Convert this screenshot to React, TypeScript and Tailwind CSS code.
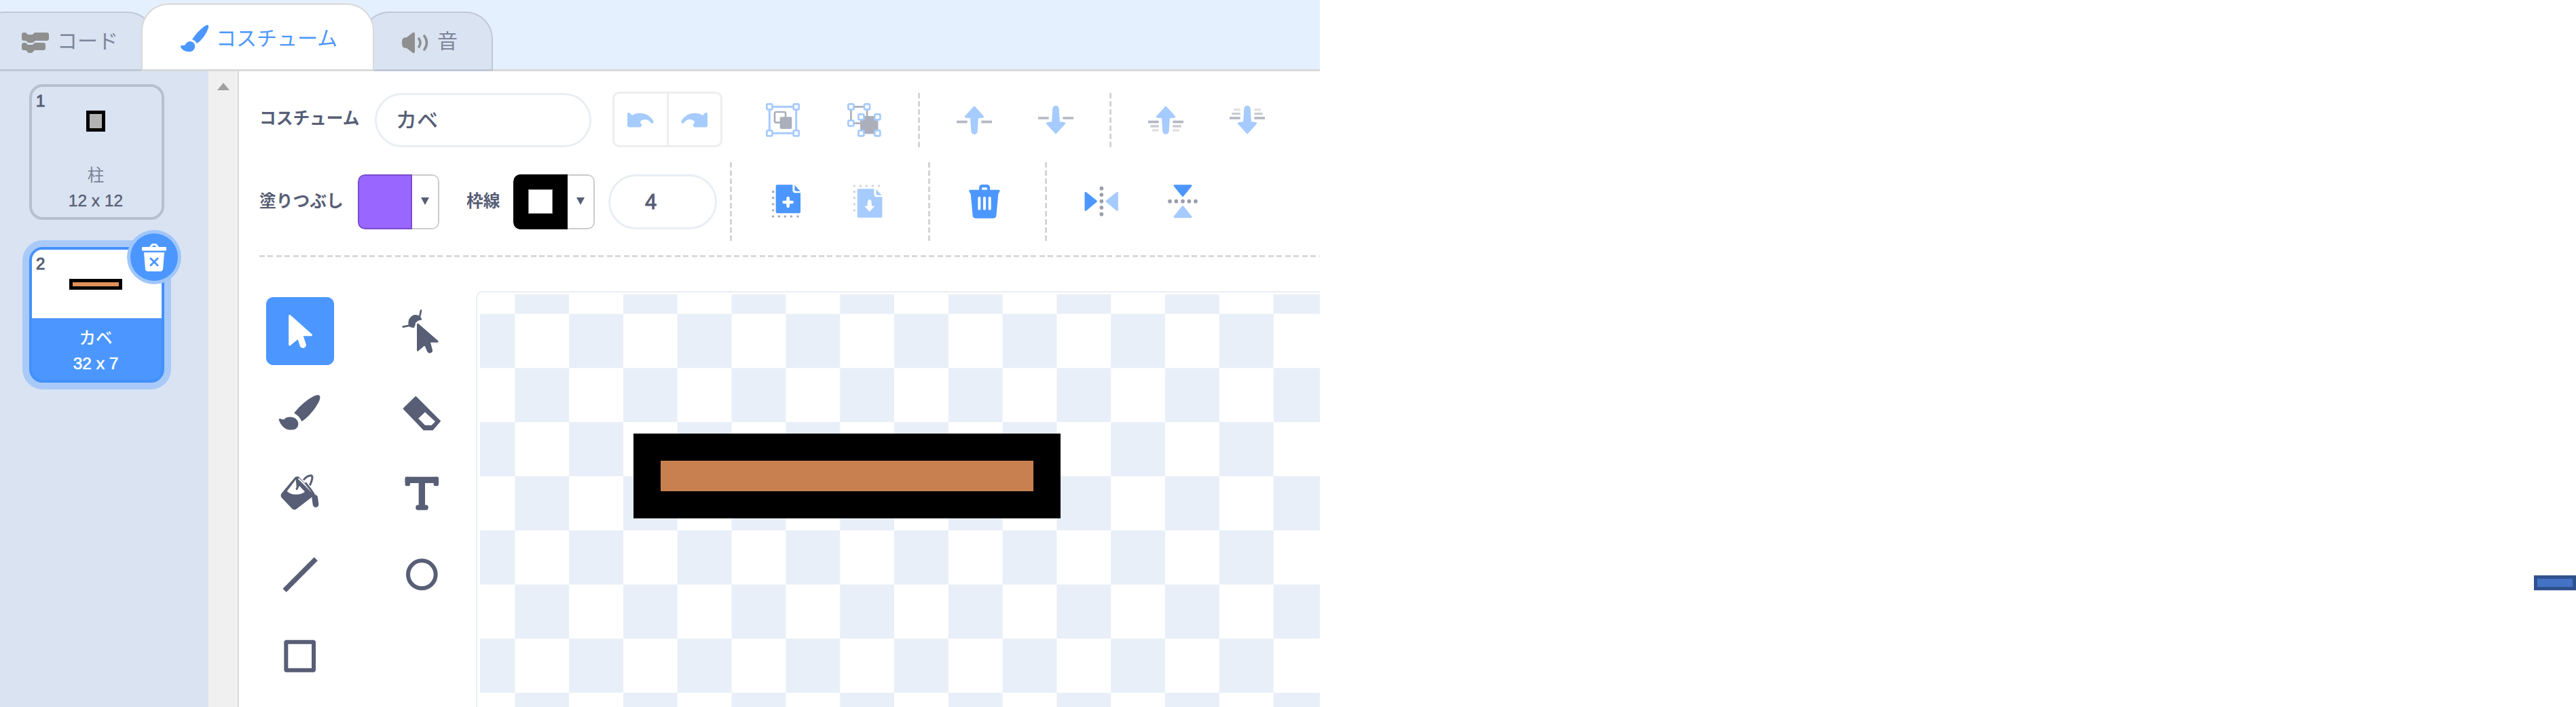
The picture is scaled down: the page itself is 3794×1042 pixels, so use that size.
import type { ReactNode } from "react";

const BLUE = "#4c97ff";
const LIGHT = "#a6cbff";
const INK = "#575e75";
const GREY = "#abafbc";

function ToolbarIcon({ children }: { children: ReactNode }) {
  return (
    <button className="flex w-[120px] shrink-0 items-center justify-center">
      <svg viewBox="0 0 180 180" className="size-[60px]" fill="none">
        {children}
      </svg>
    </button>
  );
}

function ToolIcon({ children, selected = false }: { children: ReactNode; selected?: boolean }) {
  return (
    <button
      className={
        selected
          ? "flex size-[100px] items-center justify-center rounded-[10px] border border-[#4490fb] bg-[#4c97ff]"
          : "flex size-[100px] items-center justify-center"
      }
    >
      <svg viewBox="0 0 210 210" className="size-[70px] shrink-0" fill="none">
        {children}
      </svg>
    </button>
  );
}

function Separator({ className }: { className: string }) {
  return (
    <div
      className={
        "w-[3px] shrink-0 bg-[repeating-linear-gradient(to_bottom,#d4d4d4_0px,#d4d4d4_8px,transparent_8px,transparent_12px)] " +
        className
      }
    />
  );
}

function Handles({ points }: { points: [number, number][] }) {
  return (
    <>
      {points.map(([x, y]) => (
        <rect key={`${x}-${y}`} x={x - 12} y={y - 12} width="24" height="24" rx="4" fill="white" stroke={LIGHT} strokeWidth="8" />
      ))}
    </>
  );
}

function ArrowUp() {
  return (
    <path
      d="M90 31 L129 74 Q131 77 126 77 L105 79 L101 140 Q99 150 90 150 Q81 150 79 140 L75 79 L54 77 Q49 77 51 74 Z"
      fill={LIGHT}
      stroke={LIGHT}
      strokeWidth="6"
      strokeLinejoin="round"
    />
  );
}

function LayerLines({ all = false }: { all?: boolean }) {
  return (
    <g stroke={GREY} strokeLinecap="butt">
      <path d="M12 98H59M121 98H168" strokeWidth="11" opacity="0.9" />
      {all && <path d="M22 117H59M121 117H158" strokeWidth="10" opacity="0.65" />}
      {all && <path d="M30 135H59M121 135H150" strokeWidth="11" opacity="0.38" />}
    </g>
  );
}

function Dots({ points, color, r }: { points: [number, number][]; color: string; r: number }) {
  return (
    <>
      {points.map(([x, y]) => (
        <circle key={`${x}-${y}`} cx={x} cy={y} r={r} fill={color} />
      ))}
    </>
  );
}

function ColorSwatch({ children }: { children: ReactNode }) {
  return (
    <button className="flex h-[81px] w-[120px] shrink-0 overflow-hidden rounded-[10px] bg-white">
      {children}
      <span className="flex h-full w-10 items-center justify-center rounded-r-[10px] border-[2.5px] border-l-0 border-[#cbcbcb]">
        <svg viewBox="0 0 12 11" className="-mt-px h-[11px] w-3">
          <path d="M0 0H12L6 11Z" fill={INK} />
        </svg>
      </span>
    </button>
  );
}

function Tabs() {
  return (
    <header className="flex h-[105px] items-end bg-[#e5f0ff] text-[30px] leading-none">
      <div className="-ml-[34px] flex h-[88px] w-[262px] shrink-0 items-center rounded-t-[40px] border-[2.5px] border-b-[3px] border-[#c0c8d6] bg-[#d9e3f2] pl-[64px] text-[#7d8499]">
        <svg viewBox="0 0 40 30" className="mt-[5px] h-[30px] w-10" fill="#8f8f8f">
          <path d="M0 3Q0 0 3 0H6L9 3H16L19 0H37Q40 0 40 3V9Q40 12 37 12H20L16 15H10L6 12H3Q0 12 0 9Z" />
          <path d="M0 18Q0 15 3 15H6L9 18H16L19 15H32Q35 15 35 18V23Q35 26 32 26H19L15 30H10L6 26H3Q0 26 0 23Z" />
        </svg>
        <span className="ml-[12px]">コード</span>
      </div>
      <div className="relative -ml-5 flex h-[100px] w-[343px] shrink-0 items-center rounded-t-[40px] border-[2.5px] border-b-[3px] border-[#d9d9d9] bg-white pl-[56px] text-[#4c97ff]">
        <svg viewBox="0 0 42 42" className="mt-1 size-[42px]" fill={BLUE}>
          <path d="M17 22C22 14 33 3 38 1Q42 0 41 5C39 12 31 24 24 28Q22 24 17 22Z" />
          <path d="M0 33Q0 30 4 31Q7 31 8 28C11 24 17 24 20 28C23 33 20 39 15 40C8 41 2 38 0 33Z" />
        </svg>
        <span className="mt-[5px] ml-[10px]">コスチューム</span>
      </div>
      <div className="-ml-[18px] flex h-[88px] w-[193px] shrink-0 items-center rounded-t-[40px] border-[2.5px] border-b-[3px] border-[#c0c8d6] bg-[#d9e3f2] pl-[56px] text-[#7d8499]">
        <svg viewBox="0 0 40 32" className="mt-[5px] h-8 w-10" fill="none">
          <path d="M2 10Q0 16 2 22Q4 24 8 24L17 31Q20 32 20 29V3Q20 0 17 1L8 8Q4 8 2 10Z" fill="#8f8f8f" />
          <path d="M26 10Q30 16 26 22M34 6Q41 16 34 26" stroke="#8f8f8f" strokeWidth="3.6" strokeLinecap="round" />
        </svg>
        <span className="ml-[13px]">音</span>
      </div>
      <div className="h-[3px] flex-1 bg-[#d9d9d9]" />
    </header>
  );
}

function CostumeList() {
  return (
    <aside className="flex w-[307px] shrink-0 flex-col gap-[40px] bg-[#d9e3f2] pt-[19px] pl-[43px] text-[24.5px] leading-none text-[#575e75]">
      <div className="relative flex h-[200px] w-[199px] flex-col items-center rounded-[20px] border-4 border-[#b7c0cd]">
        <span className="absolute top-[9px] left-[6px] text-[24px] [-webkit-text-stroke:1px]">1</span>
        <div className="flex h-[101px] items-center pr-[3px]">
          <div className="h-[31px] w-7 border-[5px] border-black bg-[#b3b3b3]" />
        </div>
        <span className="mt-[11px] flex h-[38px] items-center pr-[3px] text-[#7d8499]">柱</span>
        <span className="flex h-9 items-center pr-[3px] [-webkit-text-stroke:0.4px]">12 x 12</span>
      </div>
      <div className="relative flex h-[200px] w-[199px] flex-col items-center rounded-[20px] border-4 border-[#4490fb] bg-[#4c97ff] text-white shadow-[0_0_0_10px_#a9caf8]">
        <span className="absolute top-[9px] left-[6px] text-[24px] text-[#575e75] [-webkit-text-stroke:1px]">2</span>
        <div className="flex h-[101px] w-full items-center justify-center rounded-t-[15px] bg-white pr-[3px]">
          <div className="h-4 w-[78px] border-[5px] border-black bg-[#df9159]" />
        </div>
        <span className="mt-[11px] flex h-[38px] items-center pr-[3px] font-medium">カベ</span>
        <span className="flex h-9 items-center pr-[3px] [-webkit-text-stroke:0.6px]">32 x 7</span>
        <button className="absolute -top-[24px] -right-[24px] flex size-[70px] items-center justify-center rounded-full bg-[#4c97ff] shadow-[0_0_0_5px_#a0c6fa]">
          <svg viewBox="0 0 36 41" className="h-[41px] w-9" fill="none">
            <path d="M0 6Q0 5 1 5H11L14 1Q15 0 16 0H20Q21 0 22 1L25 5H35Q36 5 36 6V9Q36 10.500 35 10.500H1Q0 10.500 0 9ZM15 5H21L20 3H16Z" fill="white" fillRule="evenodd" />
            <path d="M3 13H33L31 38Q30 41 27 41H9Q6 41 5 38Z" fill="white" />
            <path d="M13 22L23 32M23 22L13 32" stroke={BLUE} strokeWidth="3" strokeLinecap="round" />
          </svg>
        </button>
      </div>
    </aside>
  );
}

function HistoryArrow() {
  return (
    <path
      d="M0 2Q0 0 2 0Q4 0 5 2L7 4C17 -2 32 0 38.500 13Q39 15 37 16Q35 16 34 14C30 9 24 9 20 12Q18 14 20 16Q23 19 19 21.500H3Q0 21.500 0 19Z"
      fill={LIGHT}
    />
  );
}

function TopToolbar() {
  return (
    <div className="mt-8 ml-[30px] flex h-20 shrink-0 items-center text-[24.700px] leading-none font-bold text-[#575e75]">
      <span className="-mt-[3px] w-[170px] shrink-0 whitespace-nowrap">コスチューム</span>
      <div className="flex h-20 w-[319px] shrink-0 items-center rounded-full border-[3px] border-[#e9eef4] pl-[28px] text-[31px] font-medium">カベ</div>
      <div className="-mt-[2px] ml-[31px] flex h-[82px] w-[162px] shrink-0 rounded-[10px] border-[3px] border-[#eeeeee]">
        <button className="flex flex-1 items-center justify-center border-r-[3px] border-[#eeeeee]">
          <svg viewBox="0 0 39 22" className="mt-[2px] h-[22px] w-[39px]">
            <HistoryArrow />
          </svg>
        </button>
        <button className="flex flex-1 items-center justify-center">
          <svg viewBox="0 0 39 22" className="mt-[2px] h-[22px] w-[39px] -scale-x-100">
            <HistoryArrow />
          </svg>
        </button>
      </div>
      <div className="w-[29px] shrink-0" />
      <ToolbarIcon>
        <rect x="31" y="31" width="118" height="117" stroke={LIGHT} strokeWidth="9" />
        <Handles points={[[31, 31], [149, 31], [31, 148], [149, 148]]} />
        <rect x="54" y="54" width="48" height="47" rx="7" stroke={GREY} strokeWidth="8" />
        <rect x="77" y="76" width="53" height="53" rx="6" fill={GREY} />
      </ToolbarIcon>
      <ToolbarIcon>
        <rect x="31" y="31" width="71" height="73" stroke={GREY} strokeWidth="8" />
        <rect x="72" y="72" width="79" height="79" fill={GREY} />
        <Handles points={[[31, 31], [102, 31], [31, 104], [76, 76], [148, 76], [76, 148], [148, 148]]} />
      </ToolbarIcon>
      <Separator className="mr-5 ml-[19px] h-20" />
      <ToolbarIcon>
        <ArrowUp />
        <LayerLines />
      </ToolbarIcon>
      <ToolbarIcon>
        <g transform="translate(0 179) scale(1 -1)">
          <ArrowUp />
          <LayerLines />
        </g>
      </ToolbarIcon>
      <Separator className="mr-5 ml-[19px] h-20" />
      <ToolbarIcon>
        <ArrowUp />
        <LayerLines all />
      </ToolbarIcon>
      <ToolbarIcon>
        <g transform="translate(0 179) scale(1 -1)">
          <ArrowUp />
          <LayerLines all />
        </g>
      </ToolbarIcon>
    </div>
  );
}

function StyleToolbar() {
  return (
    <div className="mt-[22px] ml-[30px] flex h-[116px] shrink-0 items-center text-[24.700px] leading-none font-bold text-[#575e75]">
      <span className="w-[145px] shrink-0 whitespace-nowrap">塗りつぶし</span>
      <ColorSwatch>
        <span className="h-full w-20 rounded-l-[10px] border-[2.5px] border-[#7a4ccc] bg-[#9966ff]" />
      </ColorSwatch>
      <span className="ml-[40px] w-[69px] shrink-0 whitespace-nowrap">枠線</span>
      <ColorSwatch>
        <span className="flex h-full w-20 items-center justify-center rounded-l-[10px] bg-black">
          <span className="size-9 border border-[#9a9a9a] bg-white" />
        </span>
      </ColorSwatch>
      <div className="ml-5 flex h-[81px] w-[160px] shrink-0 items-center rounded-full border-[3px] border-[#e9eef4] pl-[51px] text-[31px] font-normal [-webkit-text-stroke:1px]">4</div>
      <Separator className="ml-[19px] h-[116px]" />
      <div className="w-[22px] shrink-0" />
      <ToolbarIcon>
        <path d="M44 16H112V38Q112 52 126 52H147V136Q147 142 141 142H44Q38 142 38 136V22Q38 16 44 16Z" fill={BLUE} />
        <path d="M121 18L146 44H130Q121 44 121 36Z" fill={BLUE} />
        <path d="M92 75V111M74 93H110" stroke="white" strokeWidth="14" strokeLinecap="round" />
        <Dots color="#a9acb8" r={5.5} points={[[26, 47], [26, 74], [26, 102], [26, 129], [26, 156], [52, 156], [79, 156], [106, 156], [135, 156]]} />
      </ToolbarIcon>
      <ToolbarIcon>
        <path d="M44 34H112V56Q112 70 126 70H148V155Q148 161 142 161H44Q38 161 38 155V40Q38 34 44 34Z" fill={LIGHT} />
        <path d="M121 36L146 62H130Q121 62 121 54Z" fill={LIGHT} />
        <path d="M84 88Q92 74 100 88L102 110H115L92 135L69 110H82Z" fill="white" />
        <Dots color="#d4d6dc" r={5.5} points={[[25, 47], [25, 74], [25, 102], [25, 129], [25, 21], [52, 21], [79, 21], [106, 21], [133, 21]]} />
      </ToolbarIcon>
      <Separator className="ml-[27px] h-[116px]" />
      <div className="w-5 shrink-0" />
      <ToolbarIcon>
        <path
          d="M26 38H66V28Q68 15 80 15H100Q112 15 114 28V38H154Q160 40 156 48L151 56L142 154Q140 164 130 164H50Q40 164 38 154L29 56L23 48Q20 40 26 38ZM78 38H102V32Q101 28 97 28H83Q79 28 78 32Z"
          fill={BLUE}
          fillRule="evenodd"
        />
        <path d="M67 74V122M90 74V122M113 74V122" stroke="white" strokeWidth="12" strokeLinecap="round" />
      </ToolbarIcon>
      <Separator className="ml-[29px] h-[116px]" />
      <div className="w-5 shrink-0" />
      <ToolbarIcon>
        <path d="M21 52L67 89L21 127Z" fill={BLUE} stroke={BLUE} strokeWidth="9" strokeLinejoin="round" />
        <path d="M160 52L114 89L160 127Z" fill={LIGHT} stroke={LIGHT} strokeWidth="9" strokeLinejoin="round" />
        <Dots color="#9a9eac" r={8.5} points={[[91, 32], [91, 60], [91, 89], [91, 117], [91, 146]]} />
      </ToolbarIcon>
      <ToolbarIcon>
        <path d="M54 20H126L90 64Z" fill={BLUE} stroke={BLUE} strokeWidth="9" strokeLinejoin="round" />
        <path d="M54 158H126L90 113Z" fill={LIGHT} stroke={LIGHT} strokeWidth="9" strokeLinejoin="round" />
        <Dots color="#9a9eac" r={8.5} points={[[33, 89], [61, 89], [90, 89], [118, 89], [147, 89]]} />
      </ToolbarIcon>
    </div>
  );
}

function ToolPalette() {
  return (
    <div className="grid h-fit w-[280px] shrink-0 grid-cols-[100px_100px] gap-x-20 gap-y-[19.700px]">
      <ToolIcon selected>
        <path d="M59 37L154 122H113L127 165Q128 172 120 175Q112 177 109 170L97 134L59 165Z" fill="white" stroke="white" strokeWidth="9" strokeLinejoin="round" />
      </ToolIcon>
      <ToolIcon>
        <path d="M99 14L94 38M20 86L50 80" stroke={INK} strokeWidth="8" strokeLinecap="round" />
        <path d="M44 82Q38 48 66 34Q92 28 104 54L84 60L68 90Q52 92 44 82Z" fill={INK} />
        <path d="M85 75L172 151H136L146 194Q147 198 140 199Q133 200 130 195L117 164L85 190Z" fill={INK} stroke="white" strokeWidth="22" strokeLinejoin="round" />
        <path d="M85 75L172 151H136L146 190Q147 196 140 198Q133 200 130 193L117 162L85 190Z" fill={INK} stroke={INK} strokeWidth="8" strokeLinejoin="round" />
      </ToolIcon>
      <ToolIcon>
        <path d="M79 108C98 80 150 34 180 28Q196 26 193 42C188 70 140 130 112 144Q104 122 79 108Z" fill={INK} />
        <path d="M11 137Q10 130 20 133Q28 138 36 134C46 122 72 120 88 134C104 150 98 178 74 181C45 186 22 168 11 137Z" fill={INK} />
      </ToolIcon>
      <ToolIcon>
        <path
          d="M76 36L183 143L150 181H112L23 88ZM117 99L83 131L116 164H147L166 145Z"
          fill={INK}
          fillRule="evenodd"
          stroke={INK}
          strokeWidth="6"
          strokeLinejoin="round"
        />
      </ToolIcon>
      <ToolIcon>
        <path d="M24 108L84 36Q92 30 100 36L164 104Q165 112 158 118L88 172Q80 178 72 172L26 124Q20 116 24 108Z" fill={INK} stroke={INK} strokeWidth="5" />
        <path d="M86 44L47 96Q64 112 88 110Q112 110 126 98L96 66L90 86" fill="white" />
        <path d="M98 40Q132 72 160 102" stroke="white" strokeWidth="6" />
        <path d="M104 58L90 86" stroke={INK} strokeWidth="9" strokeLinecap="round" />
        <path d="M120 46Q136 26 154 26Q166 30 148 70" stroke={INK} strokeWidth="9" />
        <path d="M128 58L154 92Q164 106 170 120L174 152" stroke={INK} strokeWidth="9" />
        <path d="M170 124L174 154" stroke={INK} strokeWidth="26" strokeLinecap="round" />
      </ToolIcon>
      <ToolIcon>
        <g fill={INK}>
          <rect x="29" y="32" width="148" height="28" rx="6" />
          <rect x="29" y="32" width="22" height="41" rx="8" />
          <rect x="155" y="32" width="22" height="41" rx="8" />
          <rect x="89" y="46" width="28" height="130" />
          <rect x="76" y="157" width="55" height="22" rx="9" />
        </g>
      </ToolIcon>
      <ToolIcon>
        <path d="M44 167L167 43" stroke={INK} strokeWidth="22" strokeLinecap="square" />
      </ToolIcon>
      <ToolIcon>
        <circle cx="103" cy="104" r="61" stroke={INK} strokeWidth="18" />
      </ToolIcon>
      <ToolIcon>
        <rect x="43" y="43" width="122" height="124" rx="2" stroke={INK} strokeWidth="18" strokeLinejoin="round" />
      </ToolIcon>
    </div>
  );
}

function Canvas() {
  return (
    <div className="-mt-[9px] ml-[29px] flex-1 overflow-hidden rounded-tl-[10px] border-t-[2.5px] border-l-[2.5px] border-[#e9eef2] pt-[3px] pl-1">
      <div className="relative h-full bg-[conic-gradient(#e8eff8_25%,white_0_50%,#e8eff8_0_75%,white_0)] bg-[length:159.600px_159.600px] bg-[position:-28.400px_-51.300px]">
        <div className="absolute top-[205px] left-[226px] h-[125px] w-[629px] border-[40px] border-black bg-[#c88050]" />
      </div>
    </div>
  );
}

export default function App() {
  return (
    <div
      lang="ja"
      className="flex h-[1042px] w-[3794px] items-start justify-between overflow-hidden bg-white font-['Liberation_Sans','Noto_Sans_CJK_JP',sans-serif]"
    >
      <section className="flex h-full w-[1944px] flex-col overflow-hidden">
        <Tabs />
        <div className="flex min-h-0 flex-1">
          <CostumeList />
          <div className="flex w-[43px] shrink-0 justify-center bg-[#f0f0f0] pt-[17px]">
            <svg viewBox="0 0 18 11" className="h-[11px] w-[18px]">
              <path d="M9 0L18 11H0Z" fill="#a0a0a0" />
            </svg>
          </div>
          <main className="flex min-w-0 flex-1 flex-col border-l-2 border-[#d9d9d9]">
            <TopToolbar />
            <StyleToolbar />
            <div className="mt-[21px] ml-[30px] h-[3px] shrink-0 bg-[repeating-linear-gradient(to_right,#d9d9d9_0px,#d9d9d9_8px,transparent_8px,transparent_12.485px)]" />
            <div className="mt-[59px] ml-10 flex min-h-0 flex-1">
              <ToolPalette />
              <Canvas />
            </div>
          </main>
        </div>
      </section>
      <div className="mt-[848px] h-[22px] w-[62px] border-[5px] border-[#2f528f] bg-[#4472c4]" />
    </div>
  );
}
